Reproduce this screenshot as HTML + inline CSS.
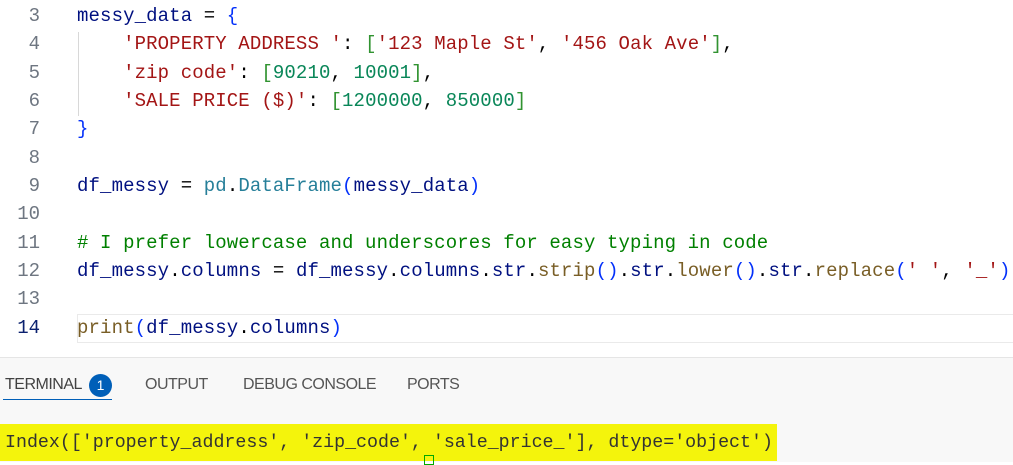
<!DOCTYPE html>
<html><head><meta charset="utf-8"><style>
body{margin:0;width:1013px;height:461px;overflow:hidden;background:#fff;position:relative;font-family:"Liberation Mono",monospace}
.ln{position:absolute;left:0;width:40px;text-align:right;color:#6e7681;font-size:19px;line-height:28px}
.code{position:absolute;left:77px;font-size:19px;line-height:28px;white-space:pre;color:#000;letter-spacing:0.12px}
.s{color:#a31515}.n{color:#098658}.v{color:#001080}.f{color:#795e26}.c{color:#267f99}.cm{color:#008000}.b{color:#0431fa}.g{color:#319331}
.tab{position:absolute;top:376px;font-family:"Liberation Sans",sans-serif;font-size:16px;color:#555;letter-spacing:-0.5px}
</style></head><body>
<div style="position:absolute;left:77px;top:314px;width:940px;height:27px;border:1px solid #eaeaea"></div>
<div style="position:absolute;left:78px;top:32px;width:1px;height:84px;background:#d8d8d8"></div>
<div class="ln" style="top:2px">3</div>
<div class="ln" style="top:30px">4</div>
<div class="ln" style="top:59px">5</div>
<div class="ln" style="top:87px">6</div>
<div class="ln" style="top:115px">7</div>
<div class="ln" style="top:144px">8</div>
<div class="ln" style="top:172px">9</div>
<div class="ln" style="top:200px">10</div>
<div class="ln" style="top:229px">11</div>
<div class="ln" style="top:257px">12</div>
<div class="ln" style="top:285px">13</div>
<div class="ln" style="top:314px;color:#0b216f">14</div>
<div class="code" style="top:2px"><span class="v">messy_data</span> = <span class="b">{</span></div>
<div class="code" style="top:30px">    <span class="s">'PROPERTY ADDRESS '</span>: <span class="g">[</span><span class="s">'123 Maple St'</span>, <span class="s">'456 Oak Ave'</span><span class="g">]</span>,</div>
<div class="code" style="top:59px">    <span class="s">'zip code'</span>: <span class="g">[</span><span class="n">90210</span>, <span class="n">10001</span><span class="g">]</span>,</div>
<div class="code" style="top:87px">    <span class="s">'SALE PRICE ($)'</span>: <span class="g">[</span><span class="n">1200000</span>, <span class="n">850000</span><span class="g">]</span></div>
<div class="code" style="top:115px"><span class="b">}</span></div>
<div class="code" style="top:172px"><span class="v">df_messy</span> = <span class="c">pd</span>.<span class="c">DataFrame</span><span class="b">(</span><span class="v">messy_data</span><span class="b">)</span></div>
<div class="code" style="top:229px"><span class="cm"># I prefer lowercase and underscores for easy typing in code</span></div>
<div class="code" style="top:257px"><span class="v">df_messy</span>.<span class="v">columns</span> = <span class="v">df_messy</span>.<span class="v">columns</span>.<span class="v">str</span>.<span class="f">strip</span><span class="b">()</span>.<span class="v">str</span>.<span class="f">lower</span><span class="b">()</span>.<span class="v">str</span>.<span class="f">replace</span><span class="b">(</span><span class="s">' '</span>, <span class="s">'_'</span><span class="b">)</span></div>
<div class="code" style="top:314px"><span class="f">print</span><span class="b">(</span><span class="v">df_messy</span>.<span class="v">columns</span><span class="b">)</span></div>
<div style="position:absolute;left:0;top:357px;width:1013px;height:104px;background:#f8f8f8;border-top:1px solid #e5e5e5"></div>
<div class="tab" style="left:5px;color:#424242">TERMINAL</div>
<div style="position:absolute;left:89px;top:374px;width:23px;height:23px;border-radius:50%;background:#005fb8;color:#fff;font-family:'Liberation Sans',sans-serif;font-size:14px;text-align:center;line-height:23px">1</div>
<div style="position:absolute;left:3px;top:399px;width:109px;height:1px;background:#005fb8"></div>
<div class="tab" style="left:145px">OUTPUT</div>
<div class="tab" style="left:243px">DEBUG CONSOLE</div>
<div class="tab" style="left:407px">PORTS</div>
<div style="position:absolute;left:0;top:424px;width:777px;height:37px;background:#f4f40c"></div>
<div style="position:absolute;left:5px;top:429px;font-size:18.3px;line-height:28px;white-space:pre;color:#333">Index(['property_address', 'zip_code', 'sale_price_'], dtype='object')</div>
<div style="position:absolute;left:424px;top:455px;width:8px;height:8px;border:1px solid #0a0"></div>
</body></html>
